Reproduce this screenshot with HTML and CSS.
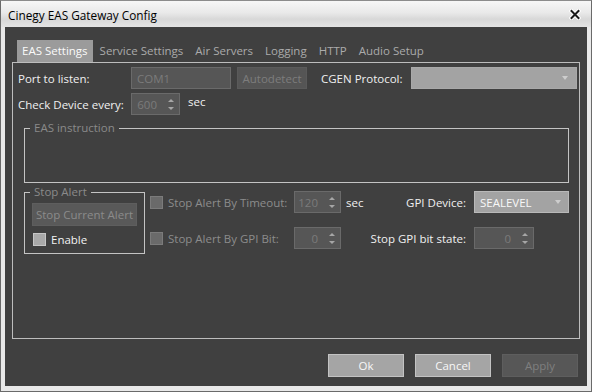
FILE: index.html
```html
<!DOCTYPE html>
<html>
<head>
<meta charset="utf-8">
<link rel="stylesheet" href="styles.css">
</head>
<body>
<div class="window">
  <div class="titlebar">
    <span class="title">Cinegy EAS Gateway Config</span>
    <svg class="close" width="12" height="11" viewBox="0 0 12 11">
      <path d="M2.5 2 L9.5 9 M9.5 2 L2.5 9" stroke="#ffffff" stroke-width="4" stroke-linecap="square"/>
      <path d="M2.5 2 L9.5 9 M9.5 2 L2.5 9" stroke="#1a1a1a" stroke-width="2" stroke-linecap="square"/>
    </svg>
  </div>
  <div class="frame">
    <div class="client">
      <div class="tabs">
        <div class="tab active">EAS Settings</div>
        <div class="tab">Service Settings</div>
        <div class="tab">Air Servers</div>
        <div class="tab">Logging</div>
        <div class="tab">HTTP</div>
        <div class="tab">Audio Setup</div>
      </div>
      <div class="pane">
        <div class="row">
          <span class="lbl w-label">Port to listen:</span>
          <div class="field port">COM1</div>
          <div class="btn btn-dis autodetect">Autodetect</div>
          <span class="lbl cgen-lbl">CGEN Protocol:</span>
          <div class="combo cgen"><span></span><i class="arrow"></i></div>
        </div>
        <div class="row row2">
          <span class="lbl w-label">Check Device every:</span>
          <div class="spin w49"><span>600</span><i class="ud"><b class="up"></b><b class="dn"></b></i></div>
          <span class="lbl unit">sec</span>
        </div>
        <fieldset class="group eas"><legend>EAS instruction</legend></fieldset>
        <div class="stop-row">
          <fieldset class="group stop">
            <legend>Stop Alert</legend>
            <div class="btn btn-dis stopbtn">Stop Current Alert</div>
            <div class="check enable"><span class="box on"></span><span>Enable</span></div>
          </fieldset>
          <div class="opts">
            <div class="check dis"><span class="box"></span><span>Stop Alert By Timeout:</span></div>
            <div class="spin w47"><span>120</span><i class="ud"><b class="up"></b><b class="dn"></b></i></div>
            <div class="mid"><span class="lbl unit2">sec</span><span class="lbl">GPI Device:</span></div>
            <div class="combo gpi"><span>SEALEVEL</span><i class="arrow"></i></div>

            <div class="check dis"><span class="box"></span><span>Stop Alert By GPI Bit:</span></div>
            <div class="spin w47"><span>0</span><i class="ud"><b class="up"></b><b class="dn"></b></i></div>
            <div class="mid end"><span class="lbl">Stop GPI bit state:</span></div>
            <div class="spin w60"><span>0</span><i class="ud"><b class="up"></b><b class="dn"></b></i></div>
          </div>
        </div>
      </div>
      <div class="actions">
        <div class="btn btn-on">Ok</div>
        <div class="btn btn-on">Cancel</div>
        <div class="btn btn-off">Apply</div>
      </div>
    </div>
  </div>
</div>
</body>
</html>
```

FILE: styles.css
```css
* { box-sizing: border-box; }
html, body { margin: 0; padding: 0; }
body {
  width: 592px;
  height: 392px;
  overflow: hidden;
  background: #ffffff;
  font-family: "Open Sans", "Noto Sans", sans-serif;
  font-size: 11.5px;
}
.window {
  width: 592px;
  height: 392px;
  display: flex;
  flex-direction: column;
  border: 1px solid #6a6a6a;
  border-top-color: #8c8c8c;
  background: #e9e9e9;
}
.titlebar {
  height: 26px;
  flex: none;
  display: flex;
  align-items: center;
  justify-content: space-between;
  padding: 0 10px 0 7px;
  background: linear-gradient(#f7f7f7, #e9e9e9 45%, #d8d8d8 70%, #e4e4e4);
  color: #000000;
}
.title { line-height: 16px; margin-top: 1px; font-size: 11.8px; }
.close { display: block; margin-top: 1px; }
.frame {
  flex: 1;
  display: flex;
  padding: 0 4px 5px 4px;
}
.client {
  flex: 1;
  display: flex;
  flex-direction: column;
  background: #404040;
  padding: 13px 7px 0 7px;
}
.tabs {
  display: flex;
  height: 22px;
  margin-left: 5px;
  flex: none;
}
.tab {
  padding: 0 5px;
  margin-right: 2px;
  line-height: 22px;
  color: #ababab;
  white-space: nowrap;
}
.tab.active { background: #9b9b9b; color: #fafafa; }
.pane {
  flex: 1;
  border: 1px solid #bdbdbd;
  padding: 4px 2px 0 5px;
  display: flex;
  flex-direction: column;
}
.row { display: flex; align-items: center; height: 22px; flex: none; }
.row2 { margin-top: 4px; }
.lbl { color: #f0f0f0; white-space: nowrap; }
.w-label { width: 113px; }
.field {
  height: 22px;
  border: 1px solid #6a6a6a;
  background: #565656;
  color: #7b7b7b;
  padding: 0 5px;
  display: flex;
  align-items: center;
}
.port { width: 100px; }
.btn {
  height: 23px;
  display: flex;
  align-items: center;
  justify-content: center;
  white-space: nowrap;
}
.btn-dis { background: #555555; border: 1px solid #5a5a5a; color: #7d7d7d; }
.autodetect { width: 70px; height: 22px; margin-left: 6px; }
.cgen-lbl { width: 90px; margin-left: 14px; }
.combo {
  height: 22px;
  background: #a3a3a3;
  border: 1px solid #a9a9a9;
  display: flex;
  align-items: center;
  justify-content: space-between;
  padding: 0 8px 0 5px;
  color: #f8f8f8;
}
.cgen { width: 166px; }
.gpi { width: 95px; border-color: #b9b9b9; padding-right: 7px; }
.arrow {
  width: 0; height: 0;
  border-left: 3px solid transparent;
  border-right: 3px solid transparent;
  border-top: 4px solid #cdcdcd;
}
.spin {
  height: 22px;
  border: 1px solid #6a6a6a;
  background: #565656;
  color: #7b7b7b;
  display: flex;
  align-items: center;
  justify-content: flex-end;
  padding-right: 5px;
}
.w49 { width: 49px; }
.w47 { width: 47px; }
.w60 { width: 60px; }
.ud {
  display: flex;
  flex-direction: column;
  justify-content: space-between;
  height: 11px;
  margin-left: 11px;
}
.ud b { width: 0; height: 0; border-left: 3px solid transparent; border-right: 3px solid transparent; }
.ud .up { border-bottom: 3px solid #a6a6a6; }
.ud .dn { border-top: 3px solid #a6a6a6; }
.unit { margin-left: 8px; align-self: flex-start; margin-top: 1px; }
fieldset.group {
  margin: 0;
  padding: 0;
  border: 1px solid #c4c4c4;
  min-width: 0;
}
fieldset.group legend {
  padding: 0 4px;
  margin-left: 5px;
  color: #8a8a8a;
  line-height: 14px;
}
.eas { margin: 6px 0 0 6px !important; width: 545px; height: 62px; flex: none; }
.stop-row { display: flex; margin: 2px 0 0 6px; }
.stop { width: 121px; height: 69px; padding: 4px 0 0 7px !important; }
fieldset.stop legend { margin-left: -2px; }
.stopbtn { width: 105px; background: #595959; border-color: #5e5e5e; color: #8b8b8b; }
.check { display: flex; align-items: center; gap: 5px; white-space: nowrap; }
.box { width: 13px; height: 13px; border: 1px solid #7b7b7b; background: #6a6a6a; flex: none; }
.box.on { background: #a9a9a9; border-color: #c6c6c6; }
.enable { margin: 6px 0 0 1px; color: #f2f2f2; }
.check.dis { color: #8c8c8c; }
.opts {
  margin: 6px 0 0 5px;
  display: grid;
  grid-template-columns: 144px 47px 133px auto;
  grid-template-rows: 22px 22px;
  row-gap: 14px;
  align-items: center;
}
.mid { display: flex; justify-content: space-between; padding: 0 8px 0 5px; }
.mid.end { justify-content: flex-end; }
.actions {
  display: flex;
  justify-content: flex-end;
  gap: 11px;
  margin: 15px 2px 9px 0;
  flex: none;
}
.actions .btn { width: 76px; }
.btn-on { background: #a5a5a5; border: 1px solid #c3c3c3; color: #f7f7f7; }
.btn-off { background: #575757; border: 1px solid #5e5e5e; color: #7f7f7f; }
```
